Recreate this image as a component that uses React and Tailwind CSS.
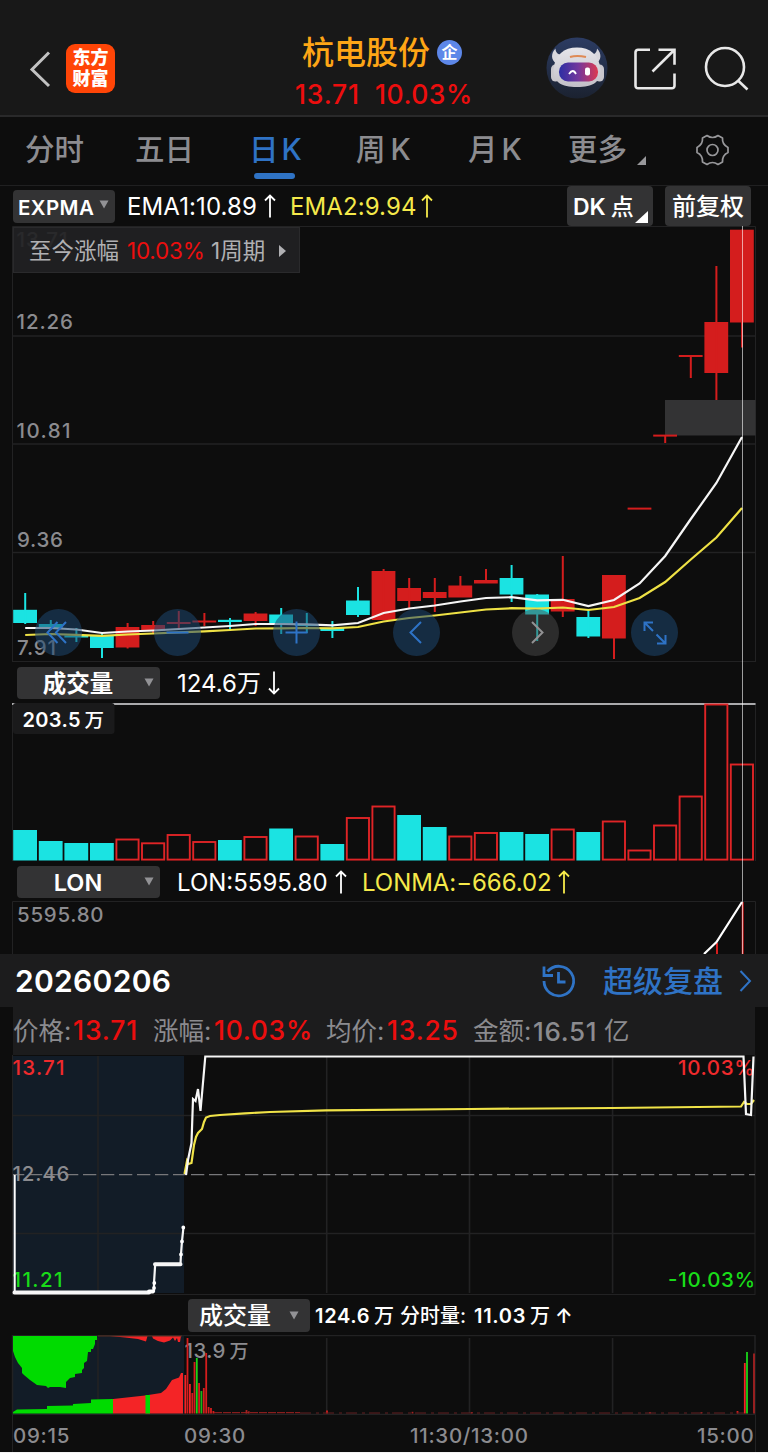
import React from "react";

const UP = "#d41d1d";
const DOWN = "#1be3e2";
const GRID = "#222223";
const candleX = (i) => 25.2 + 25.6 * i;

// [direction, bodyTop, bodyBottom, high, low]
const candles = [
  ["d", 609.8, 623, 593, 624], ["d", 624, 629, 620, 630], ["d", 635.5, 637.5, 628, 642],
  ["d", 636, 648, 632, 658], ["u", 627, 647.5, 623, 648.5], ["u", 625, 631, 621, 634],
  ["u", 622, 624, 611, 628], ["u", 620.5, 622.5, 613, 626], ["d", 619.8, 622, 618, 630],
  ["u", 613.5, 621, 612, 626], ["d", 614.5, 625, 608, 634], ["d", 624, 626, 613, 633],
  ["d", 628, 631, 621, 638], ["d", 600.5, 615, 587, 617], ["u", 571, 620, 569, 620],
  ["u", 588, 601, 578, 608], ["u", 592, 598, 578, 612], ["u", 585.5, 597.5, 576, 597],
  ["u", 580, 583.5, 569, 583], ["d", 578, 594.5, 565, 602], ["d", 594.5, 614.5, 594, 641],
  ["u", 599, 611.5, 556, 617], ["d", 617, 636.5, 610, 638], ["u", 575, 638.5, 575, 659],
  ["u", 507.6, 509.6, 508, 509], ["u", 434.6, 436.6, 435, 443], ["u", 355, 357, 355, 378],
  ["u", 322, 373, 266, 400], ["u", 229.7, 322.5, 229.7, 347.5],
];
const ema1 = [628, 628, 629.5, 633, 631.5, 630.5, 629, 627.5, 626, 624, 624, 624.3, 625.3, 623, 613, 608.5, 605.5, 601.5, 598, 597.2, 600.3, 599.8, 606, 600, 583.5, 556, 519, 483, 437];
const ema2 = [635, 634, 634.8, 635.8, 634.5, 633.5, 632.3, 631.3, 630, 628.5, 628.3, 628, 628.3, 627, 621.5, 618, 615.5, 612.5, 609.5, 608.2, 608.7, 607.5, 610, 607, 598, 582, 559.5, 537.5, 508];
const volumes = [
  ["d", 830], ["d", 841], ["d", 843], ["d", 843], ["u", 839.5], ["u", 843.3], ["u", 835], ["u", 842], ["d", 840],
  ["u", 837], ["d", 828.5], ["u", 836.5], ["d", 844], ["u", 818], ["u", 806.5], ["d", 815], ["d", 827], ["u", 836.5],
  ["u", 833], ["d", 832], ["d", 834], ["u", 829.5], ["d", 832], ["u", 821.5], ["u", 850.5], ["u", 825.5], ["u", 796.5],
  ["u", 704.5], ["u", 764.5],
];
const toLine = (ys) => ys.map((y, i) => `${candleX(i)},${y}`).join(" ");

// [x, top, colour]
const ticks = [
  [185.3, 1375, "#f42426"], [187.5, 1338, "#d41d1d"], [189.9, 1384, "#f42426"], [192.3, 1393, "#d41d1d"],
  [194.5, 1362, "#d41d1d"], [196.8, 1358, "#19d419"], [199.1, 1383, "#d41d1d"], [201.4, 1391, "#19b419"],
  [203.8, 1388, "#d41d1d"], [206.2, 1353, "#d41d1d"], [208.6, 1407, "#d41d1d"], [211, 1408, "#d41d1d"],
  [213.4, 1411, "#d41d1d"], [246.5, 1410, "#a52222"], [248.8, 1411.3, "#a52222"], [327, 1410.5, "#d41d1d"],
  [412.5, 1411.8, "#a52222"], [471.8, 1412, "#a52222"], [650, 1412, "#a52222"], [701.5, 1412, "#a52222"],
  [737.5, 1411, "#d41d1d"], [744.8, 1363, "#f42426"], [747, 1352, "#19d419"], [754, 1353.5, "#a52222"],
];

function Label({ x, y, w, size = 20.5, fill = "#8b8b8f", weight = 500, children }) {
  return (
    <text x={x} y={y} textLength={w} fontSize={size} fill={fill} fontWeight={weight}>
      {children}
    </text>
  );
}

function Caret({ className = "" }) {
  return (
    <svg className={className} width="10" height="9" viewBox="0 0 10 9">
      <path d="M0.5 0.5h9L5 8.5z" fill="#929295" />
    </svg>
  );
}

function Arrow({ down, color = "#fff", className = "" }) {
  return (
    <svg className={className} width="14" height="24" viewBox="0 0 14 24" fill="none" stroke={color} strokeWidth="1.8">
      {down ? <path d="M7 0.5v22M2 17.5l5 5 5-5" /> : <path d="M7 23.5V1.5M2 6.5l5-5 5 5" />}
    </svg>
  );
}

function Header() {
  return (
    <header className="flex h-[117px] border-b-2 border-[#29292a] bg-[#181818]">
      <svg className="mt-[50px] ml-[28px] h-[38px] w-[24px]" viewBox="0 0 24 38" fill="none" stroke="#c2c2c2" strokeWidth="3">
        <path d="M21 2.5L4 19.500 21 36" />
      </svg>
      <div className="mt-[44px] ml-[14px] flex h-[49px] w-[49px] flex-col items-center justify-center rounded-[9px] bg-[#ff4507] text-[18px] leading-[20.5px] font-black text-white">
        <span>东方</span>
        <span>财富</span>
      </div>
      <div className="ml-[180px] w-[178px] pt-[32px]">
        <div className="flex h-[40px] items-center pl-[7px]">
          <span className="pt-px text-[32px] leading-[40px] font-medium text-[#fea616]">杭电股份</span>
          <span className="ml-[7px] flex h-[25px] w-[25px] items-center justify-center rounded-full bg-[#5d87e8] text-[16px] leading-none font-bold text-white">企</span>
        </div>
        <div className="mt-[6px] flex h-[34px] items-center text-[26.5px] font-medium text-[#ec0e0e]">
          <span className="w-[80px] tracking-[0.8px]">13.71</span>
          <span className="tracking-[0.5px]">10.03%</span>
        </div>
      </div>
      <svg className="mt-[37px] ml-[73px] h-[62px] w-[62px]" viewBox="0 0 62 62">
        <defs>
          <linearGradient id="visor" x1="0" x2="1"><stop offset="0" stopColor="#2d2fa4" /><stop offset="0.5" stopColor="#74379c" /><stop offset="1" stopColor="#dd3a50" /></linearGradient>
          <linearGradient id="disc" x1="0" x2="0" y1="0" y2="1"><stop offset="0" stopColor="#2c3c63" /><stop offset="1" stopColor="#1b2230" /></linearGradient>
          <linearGradient id="shell" x1="0" x2="0" y1="0" y2="1"><stop offset="0" stopColor="#e6e5ea" /><stop offset="1" stopColor="#c2c0c8" /></linearGradient>
        </defs>
        <circle cx="31" cy="31" r="30.500" fill="url(#disc)" />
        <path d="M9.500 11.500c-5 5-4.500 12 1 15l7-9c-5 1-8-2-8-6zM51 11.500c5 5 4.500 12-1 15l-7-9c5 1 8-2 8-6z" fill="#d8d7dd" />
        <rect x="5" y="27.500" width="9" height="17" rx="4.500" fill="#c9c7cd" />
        <rect x="49" y="27.500" width="9" height="17" rx="4.500" fill="#c9c7cd" />
        <path d="M31 10.500c13 0 22 7 23.500 22C55 45 47 50 31 50S7 45 7.500 32.500C9 17.500 18 10.500 31 10.500z" fill="url(#shell)" />
        <path d="M24 20q7-2 16 0" stroke="#df8a55" strokeWidth="2.200" fill="none" />
        <rect x="13" y="25.500" width="39" height="19" rx="9" fill="url(#visor)" />
        <path d="M23 37q4-6 7 0" stroke="#fff" strokeWidth="1.800" fill="none" />
        <rect x="39" y="30.500" width="5" height="8" rx="2" fill="#fff" />
      </svg>
      <svg className="mt-[47px] ml-[25px] h-[44px] w-[44px]" viewBox="0 0 44 44" fill="none" stroke="#e8e8e8" strokeWidth="2.600">
        <path d="M17 2.800H5a2.500 2.500 0 0 0-2.500 2.500v33.500A2.500 2.500 0 0 0 5 41.300h34a2.500 2.500 0 0 0 2.500-2.500V26.500M25.500 2.800h16v15M41 3.300L19.500 24.500" />
      </svg>
      <svg className="mt-[46px] ml-[27px] h-[46px] w-[46px]" viewBox="0 0 46 46" fill="none" stroke="#e8e8e8" strokeWidth="2.600">
        <circle cx="21" cy="21" r="19" />
        <path d="M34 34.500l9.500 9" />
      </svg>
    </header>
  );
}

function Tabs() {
  return (
    <nav className="flex h-[69px] items-center border-b border-[#202021] pb-[3px] text-[29.500px] font-medium text-[#8c8c90]">
      <span className="ml-[25px] w-[110px]">分时</span>
      <span className="w-[114px]">五日</span>
      <span className="flex h-[65px] w-[107px] flex-col text-[#2f73c5]">
        <span className="flex h-[56px] items-end leading-[47px] whitespace-pre">日<span className="ml-[3px]">K</span></span>
        <span className="ml-[5px] h-[6px] w-[41px] shrink-0 rounded-full bg-[#2f73c5]" />
      </span>
      <span className="flex w-[112px]">周<span className="ml-[5px]">K</span></span>
      <span className="flex w-[100px]">月<span className="ml-[4px]">K</span></span>
      <span className="w-[69px]">更多</span>
      <svg className="mt-[22px]" width="9" height="9" viewBox="0 0 9 9"><path d="M9 0v9H0z" fill="#98989b" /></svg>
      <svg className="ml-[49px]" width="35" height="34" viewBox="0 0 35 34" fill="none" stroke="#97979a" strokeWidth="1.700">
        <path d="M12 2.500Q17.500 6.500 23 2.500L27.500 5Q27 11.500 33 14.500V19.500Q27 22.500 27.500 29L23 31.500Q17.500 27.500 12 31.500L7.500 29Q8 22.500 2 19.500V14.500Q8 11.500 7.500 5Z" strokeLinejoin="round" />
        <circle cx="17.500" cy="17" r="5.500" />
      </svg>
    </nav>
  );
}

function IndicatorRow() {
  return (
    <div className="flex h-[40px] items-center text-[24px]">
      <div className="ml-[13px] flex h-[33px] w-[102px] items-center rounded-[4px] bg-[#333334] pt-[4px] pl-[5px]">
        <span className="w-[81px] text-[20.500px] font-semibold tracking-[0.400px] text-white">EXPMA</span>
        <Caret className="-mt-[7px]" />
      </div>
      <span className="ml-[12px] w-[136px] pt-[2px] tracking-[0.100px] text-white">EMA1:10.89</span>
      <Arrow />
      <span className="ml-[13px] w-[130px] pt-[2px] tracking-[0.100px] text-[#f5e94a]">EMA2:9.94</span>
      <Arrow color="#f5e94a" />
      <div className="ml-[133px] flex h-[40px] w-[86px] items-center rounded-[4px] bg-[#333334] pt-[2px] pl-[6px] text-[23px] font-semibold text-white">
        <span>DK</span>
        <span className="ml-[5px] w-[24px] font-medium">点</span>
        <svg className="mt-[20px]" width="13" height="12" viewBox="0 0 13 12"><path d="M13 0v12H0z" fill="#fff" /></svg>
      </div>
      <div className="ml-[12px] flex h-[40px] w-[86px] items-center justify-center rounded-[4px] bg-[#333334] pt-[2px] text-[24px] font-medium text-white">前复权</div>
    </div>
  );
}

function RoundButton({ gray, children }) {
  return (
    <div className={gray ? "flex size-[47px] items-center justify-center rounded-full bg-[#4b4b4c]/50" : "flex size-[47px] items-center justify-center rounded-full bg-[#1e4770]/55"}>
      <svg width="47" height="47" viewBox="0 0 47 47" fill="none" stroke={gray ? "#929294" : "#2e73c6"} strokeWidth="2">{children}</svg>
    </div>
  );
}

function MainChart() {
  return (
    <div className="relative h-[436px]">
      <svg className="block" width="768" height="436" viewBox="0 226 768 436">
        <g stroke={GRID} fill="none">
          <path d="M12.500 662V226.500H755.500V662M12.500 661.500H755.500" strokeWidth="1" />
          <path d="M12 336H755M12 444H755M12 552.500H755" strokeWidth="1.600" />
        </g>
        <rect x="665" y="400" width="90.500" height="35.500" fill="#333334" />
        <Label x="16.500" y="247" w="51">13.71</Label>
        <Label x="16.500" y="329" w="56.500">12.26</Label>
        <Label x="16.500" y="437.500" w="54">10.81</Label>
        <Label x="17" y="546.500" w="46">9.36</Label>
        <Label x="17" y="655" w="39">7.91</Label>
        {candles.map(([dir, top, bottom, high, low], i) => (
          <g key={i} fill={dir === "u" ? UP : DOWN}>
            <rect x={candleX(i) - 12} y={top} width="23.800" height={bottom - top} />
            <rect x={candleX(i) - 1} y={high} width="2" height={low - high} />
          </g>
        ))}
        <polyline points={toLine(ema2)} fill="none" stroke="#eee145" strokeWidth="2.200" />
        <polyline points={toLine(ema1)} fill="none" stroke="#f6f6f6" strokeWidth="2.200" />
      </svg>
      <div className="absolute top-[1px] left-[13px] flex h-[46px] w-[287px] items-center border border-[#2a2a2c] bg-[#212123]/93 pt-px pl-[15px] text-[22.500px] text-[#b0b0b3]">
        <span className="w-[98px]">至今涨幅</span>
        <span className="w-[84px] tracking-[-0.200px] text-[#ec0e0e]">10.03%</span>
        <span>1周期</span>
        <svg className="ml-[14px]" width="7" height="12" viewBox="0 0 7 12"><path d="M0 0l7 6-7 6z" fill="#b0b0b3" /></svg>
      </div>
      <div className="absolute top-[383px] left-[35px] flex gap-[72.200px]">
        <RoundButton><path d="M22.500 13L12.500 23.500l10 10.500M31 13L21 23.500 31 34" /></RoundButton>
        <RoundButton><path d="M12.500 23.500h22" /></RoundButton>
        <RoundButton><path d="M12.500 23.500h22M23.500 12.500v22" /></RoundButton>
        <RoundButton><path d="M28 13L17.500 23.500 28 34" /></RoundButton>
        <RoundButton gray><path d="M20 13l10.500 10.500L20 34" /></RoundButton>
        <RoundButton><path d="M13.500 22V13.500H22M14 14l8 8M25.500 25.500l8.500 8.500M26 34.500h8.500V26" /></RoundButton>
      </div>
    </div>
  );
}

function IndicatorHead({ name, children }) {
  return (
    <div className="flex h-[41px] items-center text-[24px] text-white">
      <div className="ml-[17px] flex h-[32px] w-[143px] items-center rounded-[4px] bg-[#333334]">
        <span className="w-[122px] pt-[2px] text-center text-[23.500px] font-semibold">{name}</span>
        <Caret className="ml-[5px]" />
      </div>
      {children}
    </div>
  );
}

function VolumeChart() {
  return (
    <svg className="block" width="768" height="158" viewBox="0 703 768 158">
      <path d="M12.500 703V861M755.500 703V861" stroke={GRID} />
      <path d="M12 704H755.500" stroke="#aaaaac" strokeWidth="2" />
      {volumes.map(([dir, top], i) =>
        dir === "d" ? (
          <rect key={i} x={candleX(i) - 12} y={top} width="23.800" height={860.5 - top} fill={DOWN} />
        ) : (
          <rect key={i} x={candleX(i) - 11.2} y={top} width="22.200" height={859.6 - top} fill="none" stroke="#df2426" strokeWidth="1.900" />
        ),
      )}
      <rect x="13" y="703" width="101.500" height="31" rx="3" fill="#1a1a1b" />
      <text x="22.500" y="726.500" fontSize="20" fontWeight="600" fill="#fff">
        <tspan textLength="58">203.5</tspan>
        <tspan x="84.500" fontSize="19.500" fontWeight="500">万</tspan>
      </text>
    </svg>
  );
}

function LonChart() {
  return (
    <svg className="block" width="768" height="53" viewBox="0 901 768 53">
      <path d="M12.500 954V901.500H755.500V954" stroke={GRID} fill="none" />
      <Label x="17" y="922" w="86.500">5595.80</Label>
      <path d="M717 943V954M742.700 902V954" stroke="#d41d1d" strokeWidth="2" />
      <path d="M704 954L716.500 942 742 902" stroke="#fff" strokeWidth="2.200" fill="none" />
    </svg>
  );
}

function DateBar() {
  return (
    <div className="flex h-[53px] items-center bg-[#1c1c1d] text-[#2f73c5]">
      <span className="ml-[15px] w-[526px] pt-[2px] text-[30px] font-semibold tracking-[0.300px] text-white">20260206</span>
      <svg width="36" height="36" viewBox="0 0 36 36" fill="none" stroke="currentColor" strokeWidth="2.800">
        <path d="M3 18A14.800 14.800 0 1 0 6.500 8.500M3 3.500v9h9M17.500 9v10h7" />
      </svg>
      <span className="ml-[26px] w-[136px] pt-[2px] text-[30px] font-medium">超级复盘</span>
      <svg width="13" height="22" viewBox="0 0 13 22" fill="none" stroke="currentColor" strokeWidth="2"><path d="M1.500 1L11 11 1.500 21" /></svg>
    </div>
  );
}

function Stats() {
  return (
    <div className="mr-[13px] ml-[13px] flex h-[48px] items-center bg-[#1c1c1d] text-[25.500px] whitespace-nowrap text-[#8b8b8f]">
      <span className="w-[60px]">价格:</span>
      <span className="w-[80px] text-[26.500px] font-medium tracking-[0.900px] text-[#ec0e0e]">13.71</span>
      <span className="w-[61px]">涨幅:</span>
      <span className="w-[112px] text-[26.500px] font-medium tracking-[0.700px] text-[#ec0e0e]">10.03%</span>
      <span className="w-[61px]">均价:</span>
      <span className="w-[86px] text-[26.500px] font-medium tracking-[0.800px] text-[#ec0e0e]">13.25</span>
      <span className="w-[60px]">金额:</span>
      <span className="w-[71px] text-[26px] font-medium tracking-[0.700px]">16.51</span>
      <span>亿</span>
    </div>
  );
}

function IntradayChart() {
  return (
    <svg className="block" width="768" height="240" viewBox="0 1055 768 240">
      <rect x="13" y="1056" width="171" height="237" fill="#121c27" />
      <g stroke={GRID} fill="none" strokeWidth="1.600">
        <path d="M12.500 1055V1295M755 1055V1295M13 1294.500H755" strokeWidth="1" />
        <path d="M98 1056V1293M326.700 1056V1293M469.500 1056V1293M612.600 1056V1293M13 1115.500H755M13 1233.500H755" />
      </g>
      <path d="M13 1174.600H755" stroke="#77777a" strokeWidth="1.400" strokeDasharray="13.300 4.700" strokeDashoffset="2" />
      <Label x="12.500" y="1074.500" w="52" fill="#ef2a2c">13.71</Label>
      <Label x="12.500" y="1181" w="57">12.46</Label>
      <Label x="12.500" y="1287" w="50" fill="#19dc19">11.21</Label>
      <Label x="678" y="1074.500" w="76.500" fill="#ef2a2c">10.03%</Label>
      <Label x="668" y="1287" w="87" fill="#19dc19">-10.03%</Label>
      <polyline points="184.500,1174 187,1161 188.500,1164 191.500,1163 194,1145 196,1137 198,1133 202,1129 204,1122 206,1117.500 210,1116 220,1115 245,1113.300 270,1112 326,1110.300 470,1109 612,1108 741,1106.500 744,1102 747,1104 751,1104 754,1100" fill="none" stroke="#f0e348" strokeWidth="2.200" />
      <polyline points="186,1175 188,1160 191.500,1143 193,1099 195.500,1101 198,1089 200.500,1111 205.300,1056.500 743.500,1056.500 746,1114 751,1115 753.500,1056.500" fill="none" stroke="#f6f6f6" strokeWidth="2.200" />
      <path d="M14.700 1175V1291" stroke="#fff" strokeWidth="2" />
      <path d="M13 1292.500H149L154 1291V1283L155.200 1264H180.500L181 1254 182 1241 183.500 1227" fill="none" stroke="#f6f6f6" strokeWidth="2.200" />
      <path d="M14.500 1292.500H149M155 1264.300H180.500" stroke="#f6f6f6" strokeWidth="4" strokeLinecap="round" />
      <path d="M149 1291.500h4M154 1288v.1M154.300 1283v.1M181 1254.500v.1M182 1241.500v.1M183.300 1227.500v.1" stroke="#fff" strokeWidth="3.800" strokeLinecap="round" />
    </svg>
  );
}

function IntradayVolume() {
  return (
    <svg className="block" width="768" height="80" viewBox="0 1335 768 80">
      <rect x="13" y="1336" width="171" height="78" fill="#121c27" />
      <g stroke={GRID} fill="none">
        <path d="M12.500 1415V1335.500H755V1415M12.500 1414.500H755" strokeWidth="1.500" />
        <path d="M98 1338V1413M326.700 1338V1413M469.500 1338V1413M612.600 1338V1413" strokeWidth="1.600" />
      </g>
      <path d="M13 1336H97V1340H95V1344L93 1349H91V1352H88L87 1361 84 1363V1368L82 1370V1373L75 1374V1377L70 1378 66 1382V1388L60 1387H50L48 1388 46 1386 37 1385 30 1380 24 1375 22 1373V1368L18 1363 15 1357 13 1351Z" fill="#00db00" />
      <path d="M13 1413.500V1412L17 1409.500 47 1409V1406L73 1405.500V1404L91 1403V1399.500L113 1399V1413.500Z" fill="#00db00" />
      <path d="M113 1413.500V1399L145 1395.500 161 1393 166 1389 172 1380 179 1377.500 181 1373H183V1413.500Z" fill="#f42426" />
      <rect x="145.500" y="1395" width="4.500" height="18.500" fill="#00db00" />
      <path d="M110 1336L125 1337.500 138 1339 146 1341.500 147.500 1336H152L153 1338.500 158 1341 164 1342.500 170 1340.500 173 1337.500 175 1341 177 1338 178 1342H180L181 1336Z" fill="#f42426" />
      <path d="M98 1336H182" stroke="#582e22" strokeWidth="1" />
      <Label x="184.500" y="1358" w="41">13.9</Label>
      <Label x="229.500" y="1358" w="19" size="19">万</Label>
      {ticks.map(([x, top, color]) => (
        <rect key={x} x={x - 0.9} y={top} width="1.800" height={1413.5 - top} fill={color} />
      ))}
      <path d="M214 1412.700H300" stroke="#a52222" strokeDasharray="8 1" />
      <path d="M300 1413H744" stroke="#642022" strokeDasharray="11 5 3 4" />
    </svg>
  );
}

export default function App() {
  return (
    <div className="h-[1453px] w-[768px] overflow-hidden border-b border-[#f4f4f4] bg-[#0d0d0d] font-['Inter','Noto_Sans_CJK_SC',sans-serif] whitespace-nowrap">
      <Header />
      <Tabs />
      <IndicatorRow />
      <div className="relative">
        <MainChart />
        <IndicatorHead name="成交量">
          <span className="ml-[17px] w-[90px] pt-[3px]">124.6万</span>
          <Arrow down />
        </IndicatorHead>
        <VolumeChart />
        <div className="h-[40px]">
          <IndicatorHead name="LON">
            <span className="ml-[17px] w-[157px] pt-[2px]">LON:5595.80</span>
            <Arrow />
            <span className="ml-[14px] w-[195px] pt-[2px] tracking-[-0.050px] text-[#f5e94a]">LONMA:−666.02</span>
            <Arrow color="#f5e94a" />
          </IndicatorHead>
        </div>
        <LonChart />
        <div className="absolute top-0 left-[742px] h-[728px] w-px bg-white/60" />
      </div>
      <DateBar />
      <Stats />
      <IntradayChart />
      <div className="flex h-[40px] items-center text-[20px] font-semibold text-white">
        <div className="ml-[188px] flex h-[33px] w-[122px] items-center rounded-[4px] bg-[#333334] pl-[11px]">
          <span className="w-[90px] pt-[2px] text-[24px] font-medium">成交量</span>
          <Caret />
        </div>
        <span className="ml-[5px] w-[59px] pt-[2px] tracking-[0.700px]">124.6</span>
        <span className="w-[26px] pt-[2px] font-medium">万</span>
        <span className="w-[74px] pt-[2px] font-medium">分时量:</span>
        <span className="w-[56px] pt-[2px] tracking-[0.700px]">11.03</span>
        <span className="w-[25px] pt-[2px] font-medium">万</span>
        <span className="pt-[2px]">↑</span>
      </div>
      <IntradayVolume />
      <div className="mr-[12px] ml-[12px] flex h-[38px] items-center border-x border-[#222223] text-[20.500px] font-medium tracking-[0.700px] text-[#8b8b8f]">
        <span className="w-[171px] pt-1">09:15</span>
        <span className="w-[226px] pt-1">09:30</span>
        <span className="w-[287px] pt-1">11:30/13:00</span>
        <span className="pt-1">15:00</span>
      </div>
    </div>
  );
}
